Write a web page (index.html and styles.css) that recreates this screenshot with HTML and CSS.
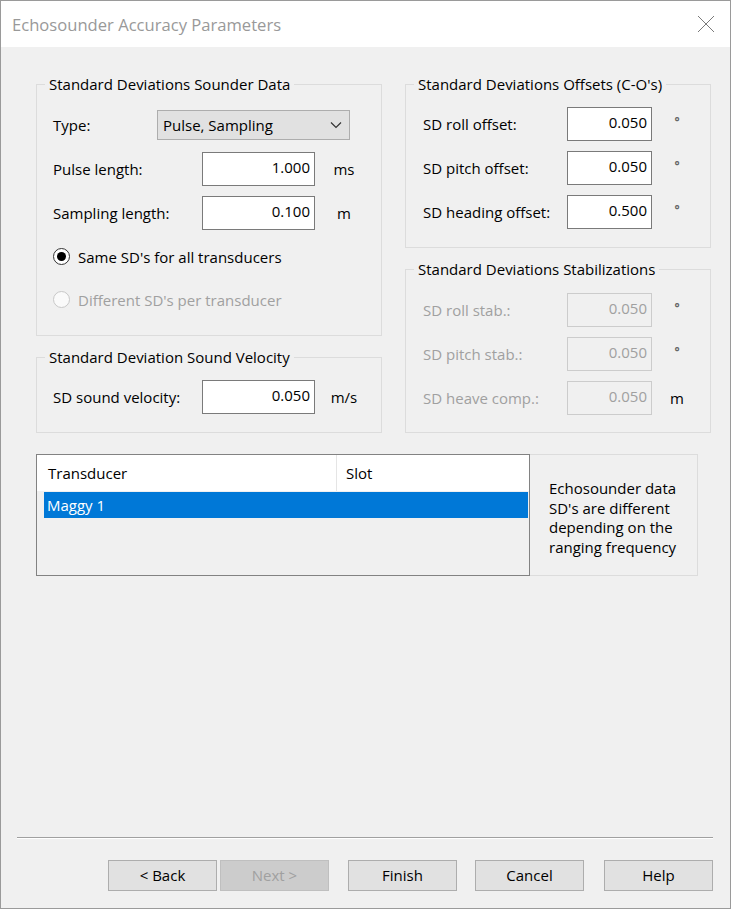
FILE: index.html
```html
<html>
<head>
    <link rel="stylesheet" href="styles.css">
</head>
<body>
    <div class="window">
        <div class="titlebar">
            <span class="title">Echosounder Accuracy Parameters</span>
            <svg class="close" width="18" height="18" viewBox="0 0 18 18">
                <path d="M1 1 L17 17 M17 1 L1 17" stroke="#7a7a7a" stroke-width="1" fill="none" />
            </svg>
        </div>

        <div class="content">
            <div class="groups">
                <div class="col col_left">
                    <fieldset class="group">
                        <legend>Standard Deviations Sounder Data</legend>
                        <div class="rows rows_sounder">
                            <div class="row">
                                <span class="lbl lbl_type">Type:</span>
                                <div class="combo">
                                    <span>Pulse, Sampling</span>
                                    <svg width="12" height="8" viewBox="0 0 12 8">
                                        <polyline points="1,1.5 6,6.5 11,1.5" stroke="#333" stroke-width="1.2" fill="none" />
                                    </svg>
                                </div>
                            </div>
                            <div class="row">
                                <span class="lbl lbl_left">Pulse length:</span>
                                <div class="field field_left">1.000</div>
                                <span class="unit unit_left">ms</span>
                            </div>
                            <div class="row">
                                <span class="lbl lbl_left">Sampling length:</span>
                                <div class="field field_left">0.100</div>
                                <span class="unit unit_left">m</span>
                            </div>
                            <div class="row">
                                <span class="radio checked"></span>
                                <span>Same SD's for all transducers</span>
                            </div>
                            <div class="row disabled">
                                <span class="radio"></span>
                                <span>Different SD's per transducer</span>
                            </div>
                        </div>
                    </fieldset>

                    <fieldset class="group group_velocity">
                        <legend>Standard Deviation Sound Velocity</legend>
                        <div class="rows rows_velocity">
                            <div class="row">
                                <span class="lbl lbl_left">SD sound velocity:</span>
                                <div class="field field_left">0.050</div>
                                <span class="unit unit_left">m/s</span>
                            </div>
                        </div>
                    </fieldset>
                </div>

                <div class="col col_right">
                    <fieldset class="group">
                        <legend>Standard Deviations Offsets (C-O's)</legend>
                        <div class="rows rows_offsets">
                            <div class="row">
                                <span class="lbl lbl_right">SD roll offset:</span>
                                <div class="field field_right">0.050</div>
                                <span class="unit unit_right deg">°</span>
                            </div>
                            <div class="row">
                                <span class="lbl lbl_right">SD pitch offset:</span>
                                <div class="field field_right">0.050</div>
                                <span class="unit unit_right deg">°</span>
                            </div>
                            <div class="row">
                                <span class="lbl lbl_right">SD heading offset:</span>
                                <div class="field field_right">0.500</div>
                                <span class="unit unit_right deg">°</span>
                            </div>
                        </div>
                    </fieldset>

                    <fieldset class="group group_stab">
                        <legend>Standard Deviations Stabilizations</legend>
                        <div class="rows rows_stab">
                            <div class="row">
                                <span class="lbl lbl_right disabled">SD roll stab.:</span>
                                <div class="field field_right field_disabled">0.050</div>
                                <span class="unit unit_right deg">°</span>
                            </div>
                            <div class="row">
                                <span class="lbl lbl_right disabled">SD pitch stab.:</span>
                                <div class="field field_right field_disabled">0.050</div>
                                <span class="unit unit_right deg">°</span>
                            </div>
                            <div class="row">
                                <span class="lbl lbl_right disabled">SD heave comp.:</span>
                                <div class="field field_right field_disabled">0.050</div>
                                <span class="unit unit_right">m</span>
                            </div>
                        </div>
                    </fieldset>
                </div>
            </div>

            <div class="list_area">
                <div class="listview">
                    <div class="lv_header">
                        <div class="lv_col lv_col1">Transducer</div>
                        <div class="lv_col lv_col2">Slot</div>
                    </div>
                    <div class="lv_row selected">Maggy 1</div>
                </div>
                <div class="note">
                    <p>Echosounder data<br>SD's are different<br>depending on the<br>ranging frequency</p>
                </div>
            </div>

            <div class="footer">
                <div class="separator"></div>
                <div class="buttons">
                    <div class="btn">&lt; Back</div>
                    <div class="btn btn_disabled btn_next">Next &gt;</div>
                    <div class="btn btn_finish">Finish</div>
                    <div class="btn btn_cancel">Cancel</div>
                    <div class="btn btn_help">Help</div>
                </div>
            </div>
        </div>
    </div>
</body>
</html>
```

FILE: styles.css
```css
* {
    box-sizing: border-box;
}

body {
    margin: 0;
    font-family: "Open Sans", "Noto Sans", sans-serif;
    font-size: 15px;
    color: #000;
    background-color: #f0f0f0;
}

.window {
    width: 731px;
    height: 909px;
    border: 1px solid #9a9a9a;
    background-color: #f0f0f0;
    display: flex;
    flex-direction: column;
}

.titlebar {
    height: 46px;
    background-color: white;
    display: flex;
    align-items: center;
    justify-content: space-between;
    padding: 0 15px 0 11px;
}

.title {
    font-size: 16.6px;
    color: #999;
}

.close {
    display: block;
}

.content {
    flex: 1;
    display: flex;
    flex-direction: column;
    padding-top: 27px;
}

.groups {
    display: flex;
    padding-left: 35px;
}

.col {
    display: flex;
    flex-direction: column;
}

.col_left {
    width: 346px;
}

.col_right {
    width: 306px;
    margin-left: 23px;
}

fieldset.group {
    margin: 0;
    padding: 0;
    border: 1px solid #dcdcdc;
    min-width: 0;
}

fieldset.group legend {
    margin-left: 8px;
    padding: 0 4px;
    line-height: 20px;
}

.group_velocity,
.group_stab {
    margin-top: 11px !important;
}

.rows {
    display: grid;
}

.rows_sounder {
    padding: 9px 16px 14px 16px;
    grid-template-rows: 44px 44px 44px 43px 43px;
}

.rows_velocity {
    padding: 8px 16px 13px 16px;
    grid-template-rows: 44px;
}

.rows_offsets {
    padding: 8px 17px 13px 17px;
    grid-template-rows: 44px 44px 44px;
}

.rows_stab {
    padding: 9px 17px 12px 17px;
    grid-template-rows: 44px 44px 44px;
}

.row {
    display: flex;
    align-items: center;
}

.lbl_type {
    width: 104px;
}

.lbl_left {
    width: 149px;
}

.lbl_right {
    width: 144px;
}

.disabled {
    color: #a0a0a0;
}

.combo {
    width: 193px;
    height: 30px;
    background-color: #e1e1e1;
    border: 1px solid #adadad;
    display: flex;
    align-items: center;
    justify-content: space-between;
    padding: 0 7px 0 5px;
}

.combo svg {
    display: block;
}

.field {
    height: 34px;
    background-color: white;
    border: 1px solid #7a7a7a;
    text-align: right;
    padding-right: 4px;
    line-height: 28px;
}

.field_left {
    width: 113px;
}

.field_right {
    width: 85px;
}

.field_disabled {
    background-color: #f0f0f0;
    border-color: #cccccc;
    color: #a0a0a0;
}

.unit {
    text-align: center;
    color: #000;
}

.unit_left {
    width: 28px;
    margin-left: 15px;
}

.unit_right {
    width: 30px;
    margin-left: 10px;
}

.deg {
    color: #666;
    font-size: 12px;
    font-weight: bold;
    margin-top: -5px;
}

.radio {
    width: 17px;
    height: 17px;
    border-radius: 50%;
    border: 1px solid #c8c8c8;
    background-color: #fafafa;
    margin-right: 8px;
    position: relative;
}

.radio.checked {
    border-color: #333;
    background-color: white;
}

.radio.checked::after {
    content: "";
    position: absolute;
    left: 3px;
    top: 3px;
    width: 9px;
    height: 9px;
    border-radius: 50%;
    background-color: #000;
}

.list_area {
    display: flex;
    margin-top: 21px;
    padding-left: 35px;
}

.listview {
    width: 494px;
    height: 122px;
    border: 1px solid #828282;
    background-color: #f0f0f0;
}

.lv_header {
    display: flex;
    height: 36px;
    background-color: white;
}

.lv_col {
    line-height: 36px;
}

.lv_col1 {
    width: 300px;
    padding-left: 11px;
    border-right: 1px solid #e5e5e5;
}

.lv_col2 {
    flex: 1;
    padding-left: 9px;
}

.lv_row {
    height: 26px;
    line-height: 26px;
    margin: 1px 1px 0 7px;
    padding-left: 3px;
}

.lv_row.selected {
    background-color: #0078d7;
    color: white;
}

.note {
    width: 168px;
    height: 122px;
    border: 1px solid #dcdcdc;
    border-left: none;
    display: flex;
    align-items: center;
    padding: 6px 0 0 19px;
}

.note p {
    margin: 0;
    line-height: 19.5px;
}

.footer {
    margin-top: auto;
    padding: 0 17px 17px 16px;
}

.separator {
    border-top: 1px solid #a0a0a0;
    border-bottom: 1px solid white;
}

.buttons {
    display: flex;
    justify-content: flex-end;
    margin-top: 21px;
}

.btn {
    width: 109px;
    height: 31px;
    background-color: #e1e1e1;
    border: 1px solid #adadad;
    text-align: center;
    line-height: 28px;
}

.btn_disabled {
    background-color: #cccccc;
    border-color: #bfbfbf;
    color: #a0a0a0;
}

.btn_next {
    margin-left: 3px;
}

.btn_finish {
    margin-left: 19px;
}

.btn_cancel {
    margin-left: 18px;
}

.btn_help {
    margin-left: 20px;
}
```
